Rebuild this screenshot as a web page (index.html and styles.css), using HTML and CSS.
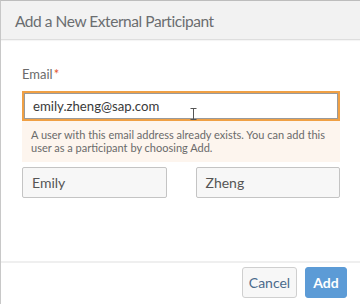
FILE: index.html
```html
<!DOCTYPE html>
<html>
<head>
<meta charset="utf-8">
<link rel="stylesheet" href="styles.css">
</head>
<body>
<div class="dialog">
  <div class="header"><span class="title">Add a New External Participant</span></div>
  <div class="content">
    <div class="label">Email<span class="req">*</span></div>
    <div class="input email">
      <span>emily.zheng@sap.com</span>
      <svg class="ibeam" width="7" height="12" viewBox="0 0 7 12"><path d="M0.5 0.5h6M3.5 0.5v11M0.5 11.5h6" fill="none" stroke="#555" stroke-width="1"/></svg>
    </div>
    <div class="warning">A user with this email address already exists. You can add this user as a participant by choosing Add.</div>
    <div class="names">
      <div class="input name">Emily</div>
      <div class="input name">Zheng</div>
    </div>
  </div>
  <div class="footer">
    <button class="btn cancel">Cancel</button>
    <button class="btn add">Add</button>
  </div>
</div>
</body>
</html>
```
FILE: styles.css
```css
html, body {
  margin: 0;
  padding: 0;
  background: #ffffff;
}
body {
  font-family: Lato, "Noto Sans", sans-serif;
  width: 360px;
  height: 304px;
  overflow: hidden;
}
.dialog {
  height: 303px;
  border-top: 1px solid #bdbdbd;
  border-left: 1px solid #c8c8c8;
  display: flex;
  flex-direction: column;
  background: #fff;
}
.header {
  height: 38px;
  background: #f2f2f2;
  border-bottom: 1px solid #dedede;
  box-shadow: 0 1px 1px rgba(0,0,0,0.04);
  display: flex;
  align-items: center;
  padding-left: 14px;
}
.title {
  font-size: 15.5px;
  letter-spacing: -0.45px;
  color: #6a6d70;
  padding-top: 1px;
}
.content {
  flex: 1;
  padding: 26px 20px 0 21px;
}
.label {
  font-size: 13px;
  color: #6a6a6a;
  line-height: 16px;
  height: 16px;
}
.req {
  color: #e4572e;
  margin-left: 1px;
}
.input {
  box-sizing: border-box;
  background: #fff;
  font-size: 14px;
  color: #333;
  display: flex;
  align-items: center;
}
.email {
  margin-top: 9px;
  height: 30px;
  border: 2px solid #f0a044;
  box-shadow: inset 0 0 0 1px #9a9a9a;
  padding-left: 9px;
  font-size: 13.2px;
  color: #3a3a3a;
  position: relative;
}
.ibeam {
  position: absolute;
  left: 166px;
  top: 15px;
}
.warning {
  background: #fdf5ee;
  font-size: 11px;
  line-height: 13px;
  color: #6a6a6a;
  padding: 7px 10px 8px 9px;
}
.names {
  margin-top: 5px;
  display: grid;
  grid-template-columns: 1fr 1fr;
  column-gap: 29px;
}
.name {
  height: 31px;
  background: #f7f7f7;
  border: 1px solid #c4c4c4;
  border-radius: 2px;
  padding-left: 9px;
  color: #555;
}
.footer {
  height: 37px;
  border-top: 2px solid #efefef;
  display: flex;
  justify-content: flex-end;
  align-items: flex-start;
  gap: 8px;
  padding: 4px 13px 0 0;
}
.btn {
  font-family: Lato, "Noto Sans", sans-serif;
  height: 31px;
  font-size: 14px;
  border-radius: 3px;
  padding: 0;
  cursor: pointer;
}
.cancel {
  width: 55px;
  background: #f7f7f7;
  border: 1px solid #cfcfcf;
  color: #4b6a8c;
}
.add {
  width: 42px;
  background: #5c9bd6;
  border: 1px solid #5c9bd6;
  color: #fff;
  font-weight: bold;
}
```
